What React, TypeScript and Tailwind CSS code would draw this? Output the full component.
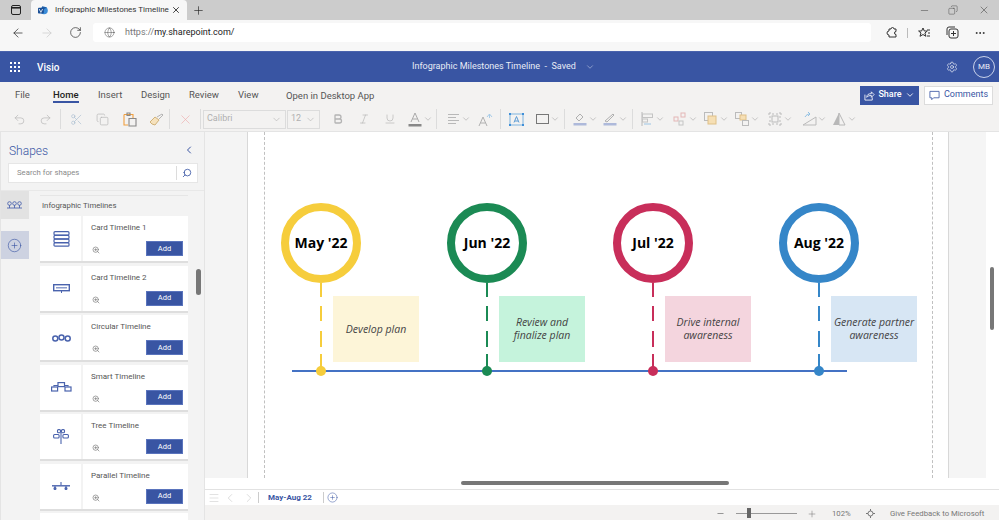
import React from 'react';
import {
  ArrowLeft, ArrowRight, ChevronDown, ChevronLeft, ChevronRight, Copy, Globe, Menu, Minus, MoreHorizontal,
  Plus, RotateCw, Search, Settings, Undo2, Redo2, Scissors, X, ZoomIn, Bold, Italic, Underline, PlusCircle,
} from 'lucide-react';

const Sep = ({ className }: { className: string }) => <div className={`w-px h-[20px] bg-[#dcdcdc] ${className}`} />;

// one ribbon button, optional little chevron next to it
const Tool = ({ children, chevron, className = '' }: { children: React.ReactNode; chevron?: boolean; className?: string }) => (
  <div className={`flex items-center h-[24px] text-[#b4b4b4] ${className}`}>
    <div className="w-[24px] flex items-center justify-center">{children}</div>
    {chevron && <ChevronDown size={10} strokeWidth={1.5} className="-ml-[4px] text-[#a8a8a8]" />}
  </div>
);

const Ribbon = () => (
  <div className="h-[50px] bg-[#f3f2f1] border-b border-[#e4e4e4] shrink-0 text-[#444]">
    <div className="h-[25px] flex items-center text-[9.500px] pl-[15px] pt-[1px]">
      <span className="w-[38px] text-[#555]">File</span>
      <span className="w-[45px]">
        <span className="relative text-[#222] font-medium">
          Home
          <span className="absolute left-0 right-0 -bottom-[3px] h-[2px] bg-[#3955a3]" />
        </span>
      </span>
      <span className="w-[43px] text-[#555]">Insert</span>
      <span className="w-[48px] text-[#555]">Design</span>
      <span className="w-[49px] text-[#555]">Review</span>
      <span className="w-[48px] text-[#555]">View</span>
      <span className="text-[#555] mt-[2px]">Open in Desktop App</span>
      <div className="ml-auto flex items-center mr-[6px]">
        <div className="w-[59px] h-[19px] bg-[#3955a3] text-white flex items-center justify-center gap-[3px] text-[9px] font-medium">
          <svg width="11" height="11" viewBox="0 0 12 12" fill="none" stroke="white" strokeWidth="0.9">
            <path d="M1 5v6h8V8" />
            <path d="M3 8c0-3 2-4 5-4V2l3 3-3 3V6C6 6 4 6.500 3 8z" />
          </svg>
          Share
          <ChevronDown size={10} />
        </div>
        <div className="ml-[5px] w-[69px] h-[19px] bg-white border border-[#dcdcdc] text-[#3955a3] flex items-center justify-center gap-[4px] text-[9px]">
          <svg width="11" height="11" viewBox="0 0 12 12" fill="none" stroke="#3955a3" strokeWidth="0.9">
            <path d="M1 1.500h10v7H5l-2 2v-2H1z" />
          </svg>
          Comments
        </div>
      </div>
    </div>
    <div className="h-[24px] flex items-center pl-[7px]">
      <Tool><Undo2 size={13} strokeWidth={1.2} /></Tool>
      <Tool className="ml-[2px]"><Redo2 size={13} strokeWidth={1.2} /></Tool>
      <Sep className="ml-[3px]" />
      <Tool className="ml-[3px]"><Scissors size={13} strokeWidth={1.2} className="text-[#a8bcd0]" /></Tool>
      <Tool className="ml-[2px]"><Copy size={13} strokeWidth={1.2} /></Tool>
      <Tool className="ml-[4px]">
        <svg width="14" height="15" viewBox="0 0 14 15" fill="none" strokeWidth="1.100">
          <path d="M1 2.500h9V6" stroke="#f0a040" />
          <path d="M1 2.500V13h4" stroke="#f0a040" />
          <path d="M4 1h3v2.500H4z" stroke="#888" />
          <path d="M6 6.500h7V14H6z" stroke="#888" />
        </svg>
      </Tool>
      <Tool className="ml-[2px]">
        <svg width="15" height="13" viewBox="0 0 15 13" fill="none" strokeWidth="1">
          <path d="M1 9l5-5 4 3-4 5-3-1z" fill="#f6e2bd" stroke="#d0b27a" />
          <path d="M8 4l5-3 1 1-4 4" stroke="#b4b4b4" />
        </svg>
      </Tool>
      <Sep className="ml-[1px]" />
      <Tool className="ml-[3px]"><X size={15} strokeWidth={1} className="text-[#eeaaaa]" /></Tool>
      <Sep className="ml-[3px]" />
      <div className="ml-[2px] w-[83px] h-[19px] border border-[#dcdcdc] flex items-center justify-between px-[3px] text-[9px] text-[#b0b0b0]">
        Calibri <ChevronDown size={11} strokeWidth={1.3} />
      </div>
      <div className="ml-[1px] w-[33px] h-[19px] border border-[#dcdcdc] flex items-center justify-between px-[3px] text-[9px] text-[#b0b0b0]">
        12 <ChevronDown size={11} strokeWidth={1.3} />
      </div>
      <Tool className="ml-[6px]"><Bold size={12} strokeWidth={2.600} /></Tool>
      <Tool className="ml-[2px]"><Italic size={12} strokeWidth={1.300} /></Tool>
      <Tool className="ml-[2px]"><Underline size={12} strokeWidth={1.300} /></Tool>
      <Tool chevron className="ml-[1px]">
        <svg width="14" height="15" viewBox="0 0 14 15" fill="none" stroke="#aaa" strokeWidth="1">
          <path d="M3 10l4-9 4 9M4.500 7h5" />
          <rect x="0.500" y="12" width="13" height="2.500" fill="#888" stroke="none" />
        </svg>
      </Tool>
      <Sep className="ml-[3px]" />
      <Tool chevron className="ml-[4px]">
        <svg width="13" height="12" viewBox="0 0 13 12" stroke="#b8b8b8" strokeWidth="1">
          <path d="M1 1.500h11M1 4.500h8M1 7.500h11M1 10.500h8" />
        </svg>
      </Tool>
      <Tool className="ml-[2px]">
        <svg width="15" height="15" viewBox="0 0 15 15" fill="none" strokeWidth="1">
          <path d="M1 14l4-9 4 9M2.500 11h5" stroke="#b0b0b0" />
          <path d="M9 5l2.500-3L14 5M11.500 2v4" stroke="#a8cce8" />
        </svg>
      </Tool>
      <Sep className="ml-[3px]" />
      <Tool className="ml-[3px]">
        <svg width="15" height="13" viewBox="0 0 15 13" fill="none">
          <rect x="1" y="1" width="13" height="11" stroke="#7fb4e0" />
          <path d="M5 9.500l2.500-6 2.500 6M6 8h3" stroke="#5a9ad4" />
          <rect y="0" width="2" height="2" fill="#3f8fd8" />
          <rect x="13" y="0" width="2" height="2" fill="#3f8fd8" />
          <rect y="11" width="2" height="2" fill="#3f8fd8" />
          <rect x="13" y="11" width="2" height="2" fill="#3f8fd8" />
        </svg>
      </Tool>
      <Tool chevron className="ml-[2px]">
        <svg width="13" height="10" viewBox="0 0 13 10" fill="none" stroke="#777" strokeWidth="1">
          <rect x="0.500" y="0.500" width="12" height="9" />
        </svg>
      </Tool>
      <Sep className="ml-[4px]" />
      <Tool chevron className="ml-[3px]">
        <svg width="14" height="14" viewBox="0 0 14 14" fill="none" strokeWidth="1">
          <path d="M3 6l4-4 3 3-4 4z" stroke="#b0b0b0" />
          <rect x="0.500" y="11" width="13" height="2.500" fill="#aeb9da" />
        </svg>
      </Tool>
      <Tool chevron className="ml-[0px]">
        <svg width="14" height="14" viewBox="0 0 14 14" fill="none" strokeWidth="1">
          <path d="M2 9l8-7 1 1-7 7z" stroke="#b0b0b0" />
          <rect x="0.500" y="11" width="13" height="2.500" fill="#aeb9da" />
        </svg>
      </Tool>
      <Sep className="ml-[4px]" />
      <Tool chevron className="ml-[2px]">
        <svg width="13" height="14" viewBox="0 0 13 14" fill="none" strokeWidth="1">
          <path d="M1 0v14" stroke="#b8b8b8" />
          <rect x="1.500" y="2" width="10" height="3.500" stroke="#c4c4c4" />
          <rect x="1.500" y="7" width="5" height="3" stroke="#c4c4c4" />
          <path d="M3 12h7" stroke="#9cc4e4" />
        </svg>
      </Tool>
      <Tool chevron className="ml-[3px]">
        <svg width="14" height="14" viewBox="0 0 14 14" fill="none" stroke="#e4b6b6" strokeWidth="1">
          <rect x="1" y="5" width="4" height="4" />
          <rect x="8" y="1" width="4" height="4" />
          <rect x="6" y="9" width="4" height="4" stroke="#c4c4c4" />
        </svg>
      </Tool>
      <Tool chevron className="ml-[1px]">
        <svg width="14" height="14" viewBox="0 0 14 14" fill="none">
          <rect x="0.500" y="0.500" width="8" height="8" stroke="#bbb" />
          <rect x="4" y="4" width="8" height="8" fill="#f6dfb4" stroke="#dfc088" />
        </svg>
      </Tool>
      <Tool chevron className="ml-[1px]">
        <svg width="14" height="14" viewBox="0 0 14 14" fill="none" stroke="#bbb">
          <rect x="0.500" y="0.500" width="6" height="6" />
          <rect x="5" y="3" width="6" height="5" fill="#f6dfb4" stroke="#dfc088" />
          <rect x="7.500" y="8.500" width="6" height="5" />
        </svg>
      </Tool>
      <Tool chevron className="ml-[3px]">
        <svg width="14" height="14" viewBox="0 0 14 14" fill="none" stroke="#bbb">
          <path d="M2 0v14M12 0v14M0 2h14M0 12h14" strokeDasharray="2 2" />
          <rect x="4" y="4" width="6" height="6" />
        </svg>
      </Tool>
      <Tool chevron className="ml-[4px]">
        <svg width="15" height="14" viewBox="0 0 15 14" fill="none">
          <path d="M1 13L14 5v8z" stroke="#bbb" />
          <path d="M3 5c1-2 3-3 5-3M6 0l2 2-2 2" stroke="#8fc0e4" />
        </svg>
      </Tool>
      <Tool chevron className="ml-[0px]">
        <svg width="14" height="14" viewBox="0 0 14 14" fill="none">
          <path d="M7 1L1 13h6z" fill="#b8b8b8" />
          <path d="M7 1l6 12H7z" stroke="#b8b8b8" />
        </svg>
      </Tool>
    </div>
  </div>
);

const cardIcons: Record<string, React.ReactNode> = {
  'Card Timeline 1': (
    <svg width="17" height="16" viewBox="0 0 17 16" fill="none" stroke="#4a63ad" strokeWidth="1.200">
      <rect x="1" y="0.700" width="15" height="3.400" rx="1" />
      <rect x="1" y="4.400" width="15" height="3.400" rx="1" />
      <rect x="1" y="8.100" width="15" height="3.400" rx="1" />
      <rect x="1" y="11.800" width="15" height="3.400" rx="1" />
    </svg>
  ),
  'Card Timeline 2': (
    <svg width="17" height="9" viewBox="0 0 17 9" fill="none">
      <rect x="0.700" y="0.700" width="15.600" height="6" stroke="#4a63ad" strokeWidth="1.400" />
      <rect x="3" y="3" width="11" height="1.500" fill="#8b9ccc" />
      <path d="M8.500 7v2" stroke="#4a63ad" />
    </svg>
  ),
  'Circular Timeline': (
    <svg width="19" height="8" viewBox="0 0 19 8" fill="none" stroke="#4a63ad" strokeWidth="1.500">
      <circle cx="3.300" cy="4.500" r="2.500" />
      <circle cx="9.500" cy="3.500" r="2.500" />
      <circle cx="15.700" cy="4.500" r="2.500" />
    </svg>
  ),
  'Smart Timeline': (
    <svg width="21" height="10" viewBox="0 0 21 10" fill="none" stroke="#4a63ad" strokeWidth="1.200">
      <rect x="0.600" y="5" width="6" height="4" />
      <rect x="7" y="0.600" width="6.500" height="4" />
      <rect x="14" y="5" width="6" height="4" />
      <path d="M3 4.500V3.500h4M14 3.500h3v1" />
    </svg>
  ),
  'Tree Timeline': (
    <svg width="16" height="15" viewBox="0 0 16 15" fill="none" stroke="#4a63ad" strokeWidth="1.100">
      <path d="M8 4v11" />
      <rect x="4.500" y="0.600" width="3" height="3.200" rx="1" />
      <rect x="8.500" y="0.600" width="3" height="3.200" rx="1" />
      <rect x="0.600" y="5.500" width="5.500" height="3.500" rx="1" />
      <rect x="9.900" y="5.500" width="5.500" height="3.500" rx="1" />
    </svg>
  ),
  'Parallel Timeline': (
    <svg width="18" height="8" viewBox="0 0 18 8" fill="none" stroke="#4a63ad" strokeWidth="1.100">
      <path d="M0 3.800h18" strokeWidth="1.400" />
      <path d="M9 0v3M3 4v2M14 4v2" />
      <circle cx="3" cy="6.500" r="1" fill="#4a63ad" />
      <circle cx="14" cy="6.500" r="1" fill="#4a63ad" />
    </svg>
  ),
};

const ShapeCard = ({ title }: { title: string }) => (
  <div className="h-[45px] mb-[4.500px] w-[148px] bg-white shadow-[0_2px_0_#dedede] flex shrink-0">
    <div className="w-[43px] pl-[1px] flex items-center justify-center border-r-2 border-[#f3f3f3]">{cardIcons[title]}</div>
    <div className="flex-1 pl-[8px] pt-[5px] text-[8px] leading-[14px] text-[#555]">
      {title}
      <div className="flex items-end justify-between pr-[5px] mt-[6px]">
        <ZoomIn size={8} className="text-[#777] ml-[1px] mb-[2px]" />
        <div className="w-[37px] h-[15px] bg-[#3955a3] border border-[#5a74bd] text-white flex items-center justify-center text-[7.500px]">Add</div>
      </div>
    </div>
  </div>
);

const Sidebar = () => (
  <div className="w-[205px] shrink-0 bg-[#f3f3f3] border-r border-[#e4e4e4] border-l border-l-[#e4e4e4] relative overflow-hidden">
    <div className="h-[31px] flex items-end justify-between pl-[8px] pr-[9px]">
      <span className="text-[12px] font-light text-[#3955a3] leading-[24px]">Shapes</span>
      <ChevronLeft size={12} className="text-[#3955a3] mb-[7px]" />
    </div>
    <div className="ml-[7px] w-[190px] h-[20px] bg-white border border-[#e6e6e6] flex items-center pl-[8px] text-[7.750px] text-[#8a8a8a]">
      <span className="flex-1">Search for shapes</span>
      <div className="w-px h-[14px] bg-[#dcdcdc]" />
      <Search size={10} className="text-[#3955a3] mx-[5px] -scale-x-100" />
    </div>
    <div className="flex mt-[7px] border-t border-[#e8e8e8]">
      <div className="w-[29px] shrink-0 -ml-px">
        <div className="h-[28px] bg-[#e2e2e2] flex items-center justify-center">
          <svg width="15" height="8" viewBox="0 0 15 8" fill="none" stroke="#5068b0" strokeWidth="0.900">
            <circle cx="2.500" cy="2.500" r="1.800" />
            <circle cx="7.500" cy="2.500" r="1.800" />
            <circle cx="12.500" cy="2.500" r="1.800" />
            <path d="M2.500 4v3M7.500 4v3M12.500 4v3M0 7h15" />
          </svg>
        </div>
        <div className="h-[28px] mt-[12px] bg-[#cdd2e1] flex items-center justify-center">
          <PlusCircle size={15} strokeWidth={1} className="text-[#3955a3]" />
        </div>
      </div>
      <div className="pl-[11px]">
        <div className="w-[148px] h-[21px] mt-[4px] border-t border-[#e6e6e6] pl-[2px] pt-[4px] text-[7.750px] text-[#555]">Infographic Timelines</div>
        {Object.keys(cardIcons).map((t) => <ShapeCard key={t} title={t} />)}
        <div className="h-[45px] w-[148px] bg-white" />
      </div>
    </div>
    <div className="absolute left-[195px] top-[137px] w-[5px] h-[26px] rounded bg-[#777]" />
  </div>
);

const milestones = [
  { month: "May '22", text: ['Develop plan'], ring: 'border-[#f6cd3c]', dot: 'bg-[#f6cd3c]', stem: '#f6cd3c', box: 'bg-[#fdf5d8]' },
  { month: "Jun '22", text: ['Review and', 'finalize plan'], ring: 'border-[#1b8a54]', dot: 'bg-[#1b8a54]', stem: '#1b8a54', box: 'bg-[#c5f3dc]' },
  { month: "Jul '22", text: ['Drive internal', 'awareness'], ring: 'border-[#c82e5a]', dot: 'bg-[#c82e5a]', stem: '#c82e5a', box: 'bg-[#f4d5de]' },
  { month: "Aug '22", text: ['Generate partner', 'awareness'], ring: 'border-[#3586c8]', dot: 'bg-[#3586c8]', stem: '#3586c8', box: 'bg-[#d7e6f4]' },
];

const Milestone = ({ m }: { m: (typeof milestones)[number] }) => (
  <div className="w-[166px] h-[172px] relative shrink-0 font-['Open_Sans',sans-serif]">
    <div className={`w-[80px] h-[80px] rounded-full border-[8px] ${m.ring} bg-white flex items-center justify-center text-[14px] font-bold text-black pb-[2px]`}>
      {m.month}
    </div>
    <svg className="absolute left-[39px] top-[80px]" width="2" height="88">
      <line x1="1" y1="0" x2="1" y2="88" stroke={m.stem} strokeWidth="2" strokeDasharray="14 9 15 10 16 7 17" />
    </svg>
    <div className={`absolute left-[52px] top-[93px] w-[86px] h-[66px] ${m.box} flex flex-col items-center justify-center text-[10.500px] leading-[13px] italic text-[#444]`}>
      {m.text.map((l) => <span key={l} className="whitespace-nowrap">{l}</span>)}
    </div>
    <div className={`absolute left-[35px] top-[163px] w-[10px] h-[10px] rounded-full ${m.dot} z-10`} />
  </div>
);

const Canvas = () => (
  <div className="h-[346px] flex shrink-0 relative">
    <div className="w-[43px] bg-[#f4f4f4] border-r border-[#d8d8d8]" />
    <div className="w-[700px] bg-white relative pl-[33px] pt-[71px] flex shrink-0">
      <div className="absolute left-[16px] top-0 bottom-0 border-l border-dashed border-[#c0c0c0]" />
      <div className="absolute left-[684px] top-0 bottom-0 border-l border-dashed border-[#c0c0c0]" />
      <div className="absolute left-[44px] top-[238px] w-[555px] h-[2px] bg-[#4472c4]" />
      {milestones.map((m) => <Milestone key={m.month} m={m} />)}
    </div>
    <div className="w-[38px] bg-[#f5f5f5] border-l border-[#d8d8d8]" />
    <div className="w-[12px] bg-white relative">
      <div className="absolute left-[4px] top-[135px] w-[4px] h-[63px] rounded bg-[#777]" />
    </div>
  </div>
);

const Main = () => (
  <div className="flex-1 flex flex-col min-w-0 text-[#555]">
    <Canvas />
    <div className="h-[11px] bg-white relative shrink-0">
      <div className="absolute left-[256px] top-[3px] w-[268px] h-[4px] rounded bg-[#777]" />
    </div>
    <div className="h-[16px] bg-white border-t border-[#e2e2e2] flex items-center shrink-0 pl-[3px]">
      <Menu size={12} strokeWidth={1} className="text-[#c4c4c4]" />
      <ChevronLeft size={14} strokeWidth={1} className="ml-[3px] text-[#c4c4c4]" />
      <ChevronRight size={14} strokeWidth={1} className="ml-[5px] text-[#c4c4c4]" />
      <div className="ml-[2px] w-px h-[11px] bg-[#ccc]" />
      <span className="ml-[9px] w-[46px] text-[8px] font-bold text-[#3955a3] whitespace-nowrap">May-Aug 22</span>
      <div className="ml-[9px] w-px h-[11px] bg-[#ccc]" />
      <PlusCircle size={11} strokeWidth={1.100} className="ml-[3px] text-[#3955a3]" />
    </div>
    <div className="flex-1 bg-[#f3f2f1] flex items-center text-[7.750px] text-[#777] pl-[511px] pt-[2px]">
      <Minus size={9} />
      <div className="ml-[11px] w-[61px] h-px bg-[#999] relative">
        <div className="absolute left-[11px] -top-[5px] w-[4px] h-[10px] bg-[#666]" />
      </div>
      <Plus size={10} strokeWidth={1.300} className="ml-[10px]" />
      <span className="ml-[15px] w-[23px]">102%</span>
      <svg className="ml-[11px]" width="9" height="9" viewBox="0 0 9 9" fill="none" stroke="#777">
        <circle cx="4.500" cy="4.500" r="2.500" />
        <path d="M4.500 0v2M4.500 7v2M0 4.500h2M7 4.500h2" />
      </svg>
      <span className="ml-[15px] whitespace-nowrap">Give Feedback to Microsoft</span>
    </div>
  </div>
);

const BrowserChrome = () => (
  <>
    <div className="h-[20px] bg-[#cccccc] flex items-end shrink-0">
      <div className="w-[31px] h-[20px] flex items-center justify-center">
        <svg width="10" height="10" viewBox="0 0 10 10" fill="none" stroke="#222">
          <rect x="0.500" y="0.500" width="9" height="9" rx="1.500" />
          <path d="M0.500 2.800h9" strokeWidth="1.600" />
        </svg>
      </div>
      <div className="w-[156px] h-[20px] bg-[#f7f7f7] rounded-t-[4px] flex items-center pl-[7px] pr-[6px] text-[8px] text-[#333]">
        <svg className="shrink-0" width="10" height="11" viewBox="0 0 10 11">
          <circle cx="6" cy="5.500" r="3.800" fill="#3b8cd8" />
          <path d="M4 1.200L9 2.500 4 5.500z" fill="#1f5fa8" />
          <rect x="0" y="2.800" width="5.800" height="5.800" rx="0.800" fill="#1a4f96" />
          <path d="M1.200 4l1.700 3.400L4.600 4" stroke="white" strokeWidth="0.800" fill="none" />
        </svg>
        <span className="ml-[7px] flex-1 whitespace-nowrap">Infographic Milestones Timeline</span>
        <X size={10} className="shrink-0 text-[#222]" />
      </div>
      <div className="w-[22px] h-[20px] flex items-center justify-center">
        <Plus size={13} strokeWidth={1.200} className="text-[#222]" />
      </div>
      <div className="ml-auto h-[20px] flex items-center text-[#333]">
        <Minus size={11} strokeWidth={1} />
        <div className="ml-[18px]"><Copy size={10} strokeWidth={1} className="-scale-x-100" /></div>
        <X size={12} strokeWidth={1} className="ml-[20px] mr-[9px]" />
      </div>
    </div>
    <div className="h-[31px] bg-[#f7f7f7] flex items-center shrink-0 pb-[6px]">
      <ArrowLeft size={14} strokeWidth={1.200} className="ml-[11px] text-[#222]" />
      <ArrowRight size={14} strokeWidth={1.200} className="ml-[15px] text-[#c8c8c8]" />
      <RotateCw size={13} strokeWidth={1.200} className="ml-[15px] text-[#222]" />
      <div className="ml-[11px] w-[778px] h-[19px] bg-white rounded-[3px] flex items-center pl-[11px] text-[9px]">
        <Globe size={11} strokeWidth={1} className="text-[#444]" />
        <span className="ml-[10px] text-[#777]">https://</span><span className="text-[#222]">my.sharepoint.com/</span>
      </div>
      <svg className="ml-[15px]" width="12" height="12" viewBox="0 0 12 12" fill="none" stroke="#333" strokeWidth="1">
        <path d="M3 2h2a1.500 1.500 0 0 1 3 0h2v2.500a1.500 1.500 0 0 0 0 3V10H3V8a1.500 1.500 0 0 1 0-4z" />
      </svg>
      <div className="ml-[9px] w-px h-[10px] bg-[#bbb]" />
      <svg className="ml-[10px]" width="13" height="12" viewBox="0 0 13 12" fill="none" stroke="#333" strokeWidth="1">
        <path d="M5 1l1.300 3h3l-2.400 2 1 3.300L5 7.500 2 9.300l1-3.300L.6 4h3zM9 3h3M10 6h2M9 9h3" />
      </svg>
      <svg className="ml-[15px]" width="13" height="13" viewBox="0 0 13 13" fill="none" stroke="#333" strokeWidth="1">
        <rect x="3" y="3" width="9" height="9" rx="2" />
        <path d="M1 9V3a2 2 0 0 1 2-2h6M7.500 5v5M5 7.500h5" />
      </svg>
      <MoreHorizontal size={12} className="ml-[15px] text-[#333]" />
    </div>
    <div className="h-[31px] bg-[#3955a3] flex items-center shrink-0 text-white border-t border-[#4a63ad]">
      <div className="ml-[10px] w-[10px] grid grid-cols-3 gap-[2px]">
        {Array.from({ length: 9 }).map((_, i) => <div key={i} className="w-[2px] h-[2px] bg-white" />)}
      </div>
      <span className="ml-[17px] w-[375px] text-[10px] font-medium">Visio</span>
      <span className="w-[173px] text-[9px] text-[#e8ecf6] whitespace-nowrap">Infographic Milestones Timeline&nbsp;&nbsp;-&nbsp;&nbsp;Saved</span>
      <ChevronDown size={10} strokeWidth={1.200} className="text-[#d8def0]" />
      <Settings size={12} strokeWidth={1.200} className="ml-auto text-white" />
      <div className="ml-[15px] mr-[4px] w-[22px] h-[22px] rounded-full border border-[#c9d2ea] flex items-center justify-center text-[8px] text-[#e8ecf6]">MB</div>
    </div>
  </>
);

const App: React.FC = () => (
  <div className="w-[999px] h-[520px] overflow-hidden flex flex-col bg-white font-['Roboto','Liberation_Sans',sans-serif]">
    <BrowserChrome />
    <Ribbon />
    <div className="flex-1 flex min-h-0">
      <Sidebar />
      <Main />
    </div>
  </div>
);

export default App;
